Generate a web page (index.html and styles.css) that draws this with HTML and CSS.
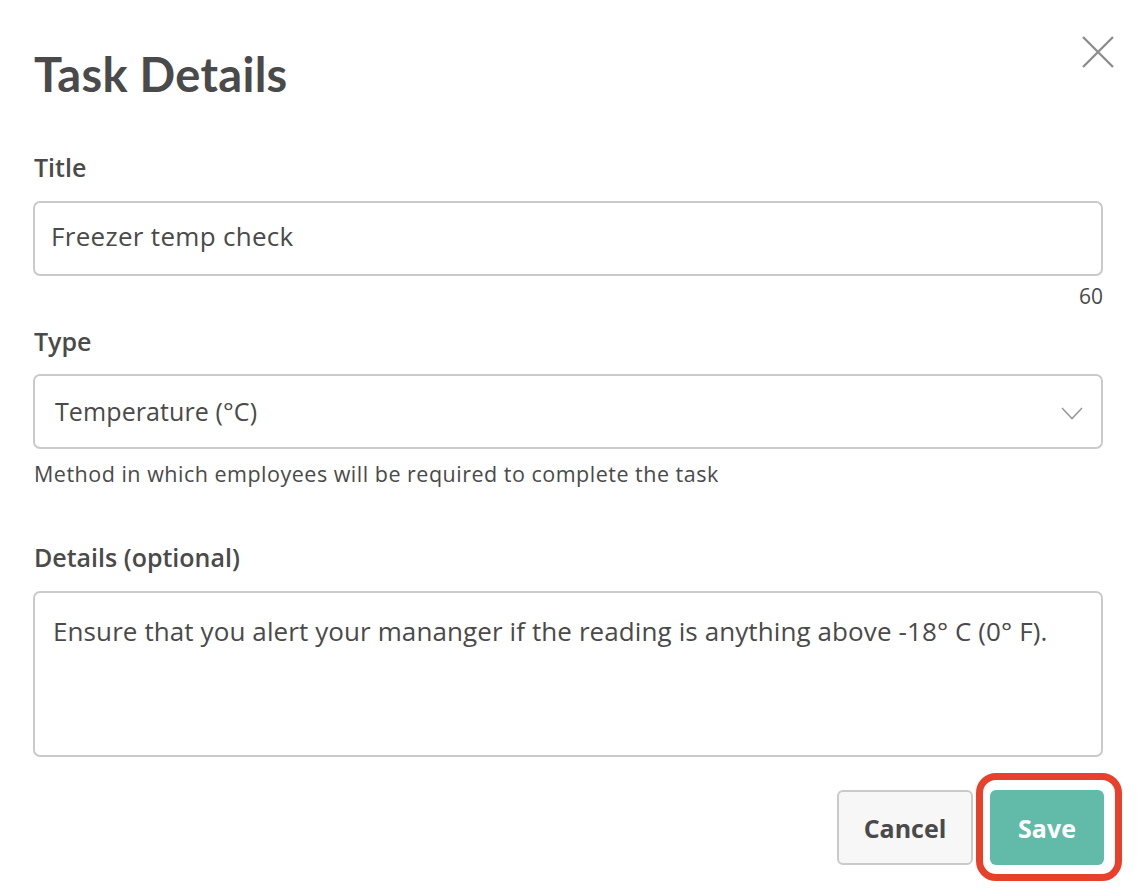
FILE: index.html
```html
<!DOCTYPE html>
<html lang="en">
<head>
<meta charset="utf-8">
<title>Task Details</title>
<link rel="stylesheet" href="styles.css">
</head>
<body>
<div class="modal">
  <div class="modal-header">
    <h1 class="modal-title">Task Details</h1>
    <button class="close-btn" aria-label="Close">
      <svg width="32" height="32" viewBox="0 0 32 32"><path d="M1 1 L31 31 M31 1 L1 31" stroke="#8e8e8e" stroke-width="2.4" fill="none"/></svg>
    </button>
  </div>

  <label class="field-label label-title">Title</label>
  <div class="input">Freezer temp check</div>
  <div class="counter">60</div>

  <label class="field-label label-type">Type</label>
  <div class="select">
    <span class="select-value">Temperature (°C)</span>
    <svg class="chevron" width="22" height="13" viewBox="0 0 22 13"><path d="M1 1 L11 11.5 L21 1" stroke="#9a9a9a" stroke-width="1.6" fill="none"/></svg>
  </div>
  <div class="help">Method in which employees will be required to complete the task</div>

  <label class="field-label label-details">Details (optional)</label>
  <div class="textarea">Ensure that you alert your mananger if the reading is anything above -18° C (0° F).</div>

  <div class="actions">
    <button class="btn btn-cancel">Cancel</button>
    <button class="btn btn-save">Save</button>
  </div>
</div>
</body>
</html>
```

FILE: styles.css
```css
html, body {
  margin: 0;
  padding: 0;
  background: #ffffff;
}
body {
  font-family: "Open Sans", "Liberation Sans", sans-serif;
  color: #4a4a4a;
}
.modal {
  padding: 46px 37px 22px 33px;
  display: flex;
  flex-direction: column;
}
.modal-header {
  display: flex;
  justify-content: space-between;
  align-items: flex-start;
}
.modal-title {
  margin: 0 0 0 1px;
  font-family: "Lato", "Open Sans", sans-serif;
  font-size: 47px;
  line-height: 56px;
  font-weight: 700;
  letter-spacing: 0.3px;
  color: #4a4a4a;
}
.close-btn {
  margin: -10px -11px 0 0;
  padding: 0;
  border: 0;
  background: none;
  width: 32px;
  height: 32px;
}
.close-btn svg { display: block; }
.field-label {
  display: block;
  font-size: 25px;
  line-height: 30px;
  font-weight: 600;
  margin-left: 1px;
}
.label-title { margin-top: 50px; margin-bottom: 19px; }
.label-type { margin-top: 18px; margin-bottom: 18px; }
.label-details { margin-top: 56px; margin-bottom: 19px; }
.input, .select, .textarea {
  box-sizing: border-box;
  border: 2px solid #cacaca;
  border-radius: 7px;
  background: #fff;
  font-size: 26px;
  letter-spacing: 0.1px;
  color: #4a4a4a;
}
.input {
  height: 75px;
  display: flex;
  align-items: center;
  padding: 0 0 5px 16px;
  letter-spacing: 0.3px;
}
.counter {
  text-align: right;
  font-size: 21px;
  line-height: 24px;
  margin-top: 8px;
}
.select {
  height: 75px;
  display: flex;
  align-items: center;
  justify-content: space-between;
  padding: 0 18px 2px 20px;
}
.select-value { font-size: 25px; }
.chevron { display: block; margin-top: 5px; }
.help {
  margin-top: 13px;
  font-size: 21.5px;
  line-height: 24px;
  letter-spacing: 0.5px;
  margin-left: 1px;
}
.textarea {
  height: 166px;
  padding: 22px 18px;
  line-height: 32px;
}
.actions {
  margin-top: 33px;
  display: flex;
  justify-content: flex-end;
  gap: 17px;
  margin-right: -1px;
}
.btn {
  height: 75px;
  box-sizing: border-box;
  border-radius: 6px;
  font-family: inherit;
  font-size: 25px;
  font-weight: 700;
  cursor: pointer;
}
.btn-cancel {
  width: 136px;
  background: #f7f7f7;
  border: 2px solid #cacaca;
  color: #4a4a4a;
}
.btn-save {
  position: relative;
  width: 114px;
  background: #62bba8;
  border: 0;
  color: #ffffff;
}
.btn-save::after {
  content: "";
  position: absolute;
  top: -17px;
  left: -14px;
  right: -18px;
  bottom: -16px;
  border: 7px solid #e8412b;
  border-radius: 20px;
  pointer-events: none;
}
```
